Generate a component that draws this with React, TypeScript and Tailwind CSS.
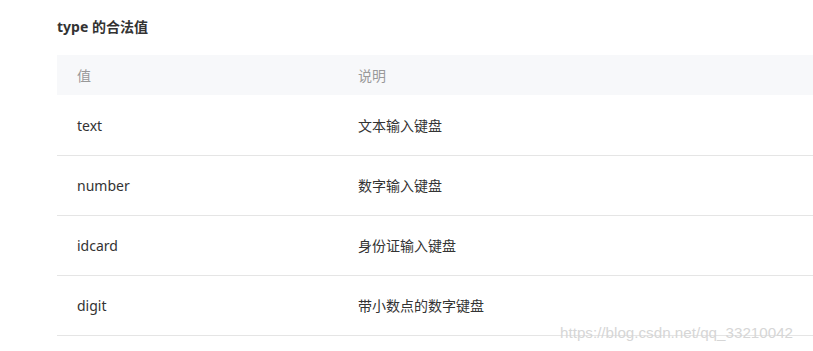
const rows = [
  { value: "text", desc: "文本输入键盘" },
  { value: "number", desc: "数字输入键盘" },
  { value: "idcard", desc: "身份证输入键盘" },
  { value: "digit", desc: "带小数点的数字键盘" },
];

const font = "font-['Noto_Sans','Noto_Sans_CJK_SC',sans-serif]";

export default function App() {
  return (
    <div className={`relative h-[351px] w-[813px] overflow-hidden bg-white ${font}`}>
      <div className="pl-[57px] pt-[17px]">
        <h3 className="mb-[18px] h-5 text-[14px] font-bold leading-5 text-[#333]">type 的合法值</h3>
        <div className="w-[780px]">
          <div className="flex h-10 items-center bg-[#f7f8fa] text-[14px] text-[#999]">
            <div className="w-[281px] pl-5">值</div>
            <div className="pl-5">说明</div>
          </div>
          <div className="pt-px">
            {rows.map((row) => (
              <div key={row.value} className="flex h-[60px] items-center border-b border-[#e5e5e5] text-[14px] text-[#333]">
                <div className="w-[281px] pl-5">{row.value}</div>
                <div className="pl-5">{row.desc}</div>
              </div>
            ))}
          </div>
        </div>
      </div>
      <span className="absolute left-[560px] top-[322px] font-['Liberation_Sans',sans-serif] text-[15.2px] text-[#d6d6d6]">
        https://blog.csdn.net/qq_33210042
      </span>
    </div>
  );
}
